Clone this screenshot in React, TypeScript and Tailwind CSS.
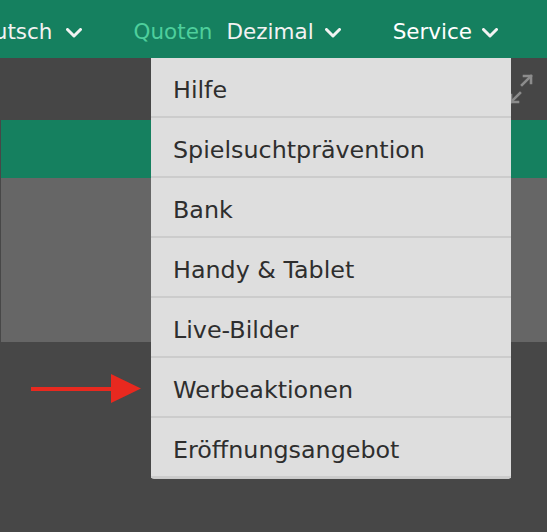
import React from "react";

const Chevron = () => (
  <svg width="16" height="10" viewBox="0 0 16 10" className="shrink-0">
    <path d="M1.5 1.5 L8 8 L14.5 1.5" fill="none" stroke="#f2f2f2" strokeWidth="3" strokeLinecap="round" strokeLinejoin="round" />
  </svg>
);

const items = [
  "Hilfe",
  "Spielsuchtprävention",
  "Bank",
  "Handy & Tablet",
  "Live-Bilder",
  "Werbeaktionen",
  "Eröffnungsangebot",
];

export default function App() {
  return (
    <div
      className="relative w-[547px] h-[532px] overflow-hidden bg-[#474747]"
      style={{ fontFamily: '"DejaVu Sans", Verdana, sans-serif' }}
    >
      {/* Header */}
      <div className="h-[58px] bg-[#15805f] flex items-center pt-[7px] text-[21.5px] text-[#f2f2f2] whitespace-nowrap">
        <span className="ml-[-36px]">Deutsch</span>
        <span className="ml-[13px]"><Chevron /></span>
        <span className="ml-[52px] text-[#4ecf9c]">Quoten</span>
        <span className="ml-[14px]">Dezimal</span>
        <span className="ml-[11px]"><Chevron /></span>
        <span className="ml-[52px] text-white">Service</span>
        <span className="ml-[10px]"><Chevron /></span>
      </div>

      {/* Dark band */}
      <div className="h-[62px] bg-[#464646] flex items-start justify-end pr-[10px] pt-[15px]">
        <svg width="32" height="32" viewBox="0 0 32 32">
          <g fill="none" stroke="#8c8c8c" strokeWidth="2.6" strokeLinecap="square">
            <path d="M17 12 L26 3" />
            <path d="M19 3 L26 3 L26 10" />
            <path d="M15 20 L6 29" />
            <path d="M6 22 L6 29 L13 29" />
          </g>
        </svg>
      </div>

      {/* Content */}
      <div className="pl-[1px]">
        <div className="h-[58px] bg-[#15805f]" />
        <div className="h-[164px] bg-[#666666]" />
      </div>

      {/* Dropdown */}
      <div className="absolute left-[151px] top-[58px] w-[360px] bg-[#dedede] rounded-b-[3px] text-[#2e2e2e] text-[23.8px] shadow-[0_1px_0_#c9c9c9]">
        {items.map((t) => (
          <div
            key={t}
            className="h-[60px] flex items-center pl-[22px] pt-[7px] border-b-2 border-[#cccccc] whitespace-nowrap"
          >
            {t}
          </div>
        ))}
      </div>

      {/* Red arrow */}
      <svg className="absolute left-[28px] top-[372px]" width="116" height="34" viewBox="0 0 116 34">
        <path d="M3 15 L85 15 L85 19 L3 19 Z" fill="#e8291f" />
        <path d="M83 2 L113 16.5 L83 31 Z" fill="#e8291f" />
      </svg>
    </div>
  );
}
